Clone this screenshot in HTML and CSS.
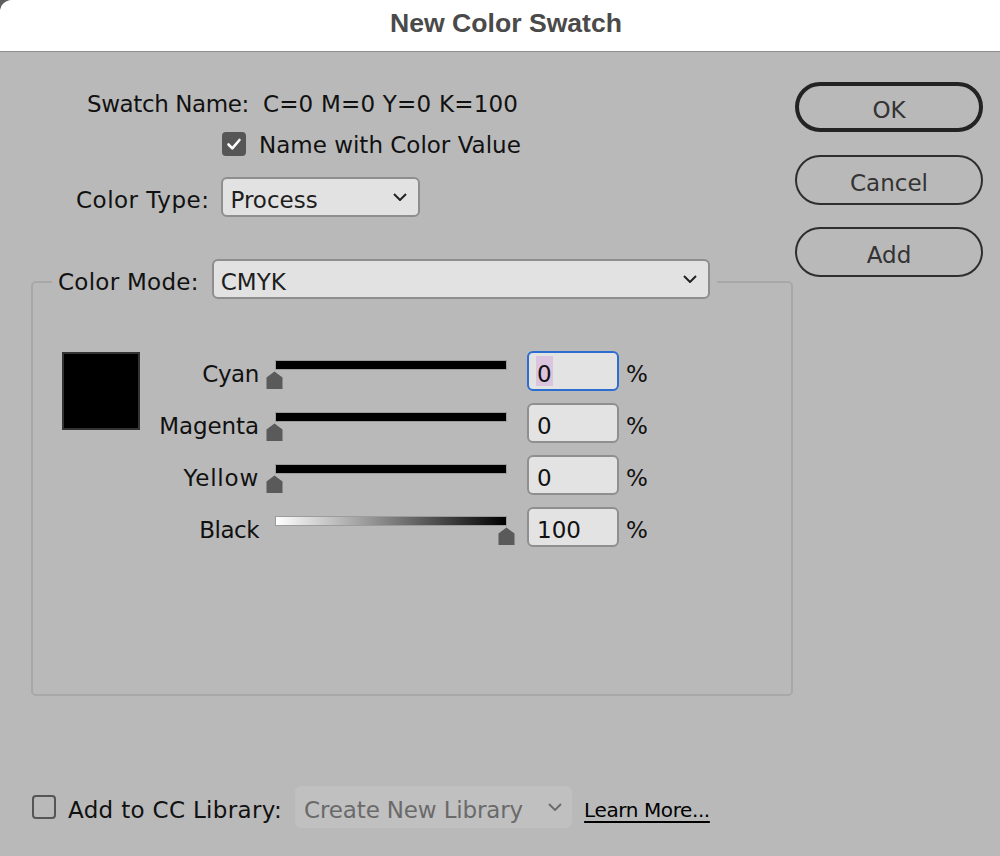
FILE: index.html
```html
<!DOCTYPE html>
<html lang="en">
<head>
<meta charset="utf-8">
<title>New Color Swatch</title>
<link rel="stylesheet" href="styles.css">
</head>
<body>
<div class="window">
  <header class="titlebar"><h1 class="title">New Color Swatch</h1></header>
  <div class="body">
    <main class="main">
      <div class="name-row">
        <span class="label name-label">Swatch Name:</span>
        <span class="value">C=0 M=0 Y=0 K=100</span>
      </div>
      <div class="check-row">
        <span class="checkbox checked">
          <svg viewBox="0 0 24 24" width="24" height="24"><polyline points="6.5,12.5 10.3,16.3 17.5,8" fill="none" stroke="#fff" stroke-width="2.6" stroke-linecap="round" stroke-linejoin="round"/></svg>
        </span>
        <span class="label">Name with Color Value</span>
      </div>
      <div class="type-row">
        <span class="label t type-label">Color Type:</span>
        <div class="select type-select">
          <span class="t">Process</span>
          <svg class="chev" viewBox="0 0 14 8" width="14" height="8"><polyline points="1,1 7,7 13,1" fill="none" stroke="#222" stroke-width="2"/></svg>
        </div>
      </div>
      <fieldset class="group">
        <legend class="legend">
          <span class="label t mode-label">Color Mode:</span>
          <div class="select mode-select">
            <span class="t">CMYK</span>
            <svg class="chev" viewBox="0 0 14 8" width="14" height="8"><polyline points="1,1 7,7 13,1" fill="none" stroke="#222" stroke-width="2"/></svg>
          </div>
        </legend>
        <div class="group-body">
          <div class="swatch"></div>
          <div class="sliders">
            <span class="s-label t cyan">Cyan</span>
            <div class="slider"><div class="track solid"></div><svg class="thumb" style="left:0px" viewBox="0 0 17 18" width="17" height="18"><path d="M8.5 0.5 L16.5 6.5 L16.5 18 L0.5 18 L0.5 6.5 Z" fill="#5a5a5a"/></svg></div>
            <div class="field focused"><span class="val sel">0</span></div>
            <span class="pct t">%</span>

            <span class="s-label t magenta">Magenta</span>
            <div class="slider"><div class="track solid"></div><svg class="thumb" style="left:0px" viewBox="0 0 17 18" width="17" height="18"><path d="M8.5 0.5 L16.5 6.5 L16.5 18 L0.5 18 L0.5 6.5 Z" fill="#5a5a5a"/></svg></div>
            <div class="field"><span class="val">0</span></div>
            <span class="pct t">%</span>

            <span class="s-label t yellow">Yellow</span>
            <div class="slider"><div class="track solid"></div><svg class="thumb" style="left:0px" viewBox="0 0 17 18" width="17" height="18"><path d="M8.5 0.5 L16.5 6.5 L16.5 18 L0.5 18 L0.5 6.5 Z" fill="#5a5a5a"/></svg></div>
            <div class="field"><span class="val">0</span></div>
            <span class="pct t">%</span>

            <span class="s-label t black">Black</span>
            <div class="slider"><div class="track ramp"></div><svg class="thumb" style="left:232px" viewBox="0 0 17 18" width="17" height="18"><path d="M8.5 0.5 L16.5 6.5 L16.5 18 L0.5 18 L0.5 6.5 Z" fill="#5a5a5a"/></svg></div>
            <div class="field"><span class="val">100</span></div>
            <span class="pct t">%</span>
          </div>
        </div>
      </fieldset>
      <div class="footer">
        <span class="checkbox empty"></span>
        <span class="label t foot-label">Add to CC Library:</span>
        <div class="lib-select">
          <span class="t">Create New Library</span>
          <svg class="chev" viewBox="0 0 14 8" width="14" height="8"><polyline points="1,1 7,7 13,1" fill="none" stroke="#6c6c6c" stroke-width="2"/></svg>
        </div>
        <span class="learn t">Learn More...</span>
      </div>
    </main>
    <aside class="buttons">
      <div class="btn default"><span class="t">OK</span></div>
      <div class="btn cancel"><span class="t">Cancel</span></div>
      <div class="btn"><span class="t">Add</span></div>
    </aside>
  </div>
</div>
</body>
</html>
```

FILE: styles.css
```css
html, body {
  margin: 0;
  padding: 0;
  background: #5e5e5e;
}
body {
  font-family: "DejaVu Sans", sans-serif;
  font-size: 23px;
  color: #111;
}
.window {
  width: 1000px;
  height: 856px;
  background: #b9b9b9;
  border-top-left-radius: 12px;
  overflow: hidden;
  display: flex;
  flex-direction: column;
}
.titlebar {
  height: 51px;
  flex: none;
  background: #fff;
  border-bottom: 1px solid #8d8d8d;
}
.title {
  margin: 0;
  padding: 8px 0 0 12px;
  text-align: center;
  font: 700 26.6px/30px "Liberation Sans", Arial, sans-serif;
  color: #4a4a4a;
}
.body {
  display: flex;
  flex: 1;
}
.main {
  width: 795px;
  flex: none;
  padding-top: 39px;
  box-sizing: border-box;
}
.t {
  line-height: 26px;
  padding-top: 5px;
}
.name-row {
  display: flex;
  gap: 14px;
  margin-left: 87px;
  line-height: 26px;
}
.name-label { letter-spacing: -0.4px; }
.value { letter-spacing: 0.2px; }
.check-row {
  display: flex;
  align-items: flex-start;
  gap: 13px;
  margin: 15px 0 0 222px;
  line-height: 26px;
}
.checkbox {
  width: 24px;
  height: 24px;
  flex: none;
  box-sizing: border-box;
  border-radius: 4px;
}
.checkbox svg { display: block; }
.checkbox.checked { background: #565656; }
.checkbox.empty { border: 2px solid #555; }
.type-row {
  display: flex;
  align-items: center;
  gap: 12px;
  margin: 19px 0 0 76px;
}
.type-label { letter-spacing: 0.5px; }
.mode-label { letter-spacing: 0.27px; }
.select {
  display: flex;
  align-items: center;
  justify-content: space-between;
  height: 40px;
  box-sizing: border-box;
  border: 2px solid #8e8e8e;
  border-radius: 6px;
  background: #e2e2e2;
  padding: 0 11px 0 7px;
  color: #1e1e1e;
}
.chev { display: block; flex: none; }
.type-select { width: 199px; }
.mode-select { width: 498px; }

.group {
  margin: 42px 0 0 31px;
  width: 762px;
  height: 437px;
  box-sizing: border-box;
  border: 2px solid #a8a8a8;
  border-radius: 5px;
  padding: 0;
  min-inline-size: 0;
}
.legend {
  display: flex;
  align-items: center;
  gap: 13px;
  padding: 0 7px 6px 6px;
  margin-left: 19px;
}
.group-body {
  display: flex;
  align-items: flex-start;
  padding: 46px 0 0 29px;
}
.swatch {
  width: 78px;
  height: 78px;
  flex: none;
  box-sizing: border-box;
  background: #000;
  border: 2px solid #333;
  margin-top: 1px;
}
.sliders {
  display: grid;
  grid-template-columns: 126px 261px 99px auto;
  grid-auto-rows: 40px;
  row-gap: 12px;
}
.s-label {
  align-self: center;
  text-align: right;
  padding-right: 7px;
}
.s-label.cyan { letter-spacing: -0.4px; }
.s-label.magenta { letter-spacing: -0.1px; }
.s-label.yellow { letter-spacing: 0.8px; }
.s-label.black { letter-spacing: -0.5px; }
.slider {
  position: relative;
  width: 249px;
  height: 40px;
}
.track {
  margin: 9px 0 0 9px;
  width: 232px;
  height: 10px;
  box-sizing: border-box;
  border: 1px solid #9c9c9c;
}
.track.solid { background: #000; }
.track.ramp { background: linear-gradient(to right, #ffffff, #000000); }
.thumb {
  position: absolute;
  top: 20px;
  display: block;
}
.field {
  width: 92px;
  height: 40px;
  box-sizing: border-box;
  border: 2px solid #8f8f8f;
  border-radius: 6px;
  background: #e3e3e3;
  display: flex;
  align-items: flex-start;
  padding: 3px 0 0 7px;
  color: #111;
}
.field.focused { border-color: #2c6dd1; }
.val {
  line-height: 24px;
  padding: 6px 1px 0;
}
.val.sel { background: #dbc4dd; }
.pct {
  align-self: center;
}

.footer {
  display: flex;
  align-items: center;
  height: 42px;
  margin: 90px 0 0 32px;
}
.foot-label {
  margin-left: 12px;
  letter-spacing: 0.33px;
}
.lib-select {
  display: flex;
  align-items: center;
  justify-content: space-between;
  width: 277px;
  height: 42px;
  box-sizing: border-box;
  margin-left: 13px;
  padding: 0 10px 0 9px;
  border-radius: 6px;
  background: #c0c0c0;
  color: #6a6a6a;
}
.lib-select .t { letter-spacing: -0.15px; }
.learn {
  margin-left: 12px;
  font-size: 20px;
  letter-spacing: -0.4px;
  color: #000;
  text-decoration: underline;
  text-decoration-thickness: 2px;
  text-underline-offset: 4px;
}

.buttons {
  width: 188px;
  flex: none;
  padding-top: 30px;
  display: flex;
  flex-direction: column;
}
.btn {
  height: 50px;
  box-sizing: border-box;
  border: 2px solid #2e2e2e;
  border-radius: 25px;
  display: flex;
  align-items: center;
  justify-content: center;
  color: #333;
}
.btn + .btn { margin-top: 22px; }
.btn.cancel { margin-top: 23px; }
.btn.default {
  border-width: 4px;
  border-color: #232323;
}
```
